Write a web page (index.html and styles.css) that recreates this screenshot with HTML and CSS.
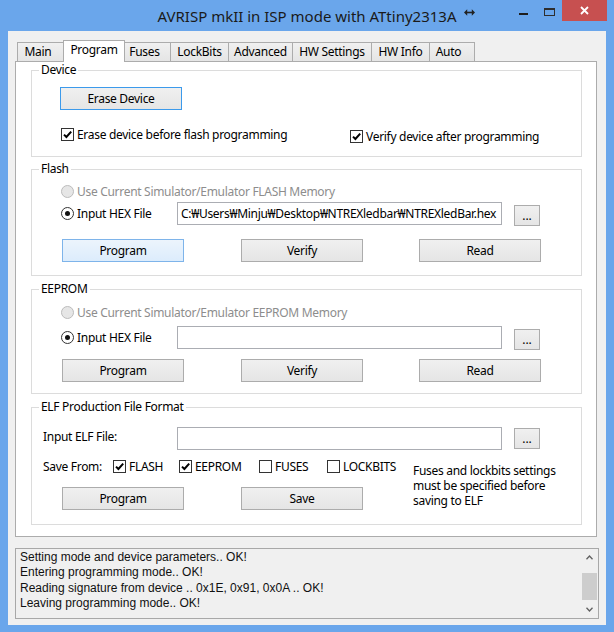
FILE: index.html
```html
<!DOCTYPE html>
<html>
<head>
<meta charset="utf-8">
<title>AVRISP mkII</title>
<link rel="stylesheet" href="styles.css">
</head>
<body>
<div class="window">
  <div class="titlebar">
    <div class="tb-left"></div>
    <div class="title">AVRISP mkII in ISP mode with ATtiny2313A</div>
    <div class="tb-right">
      <svg class="resize-arrow" width="11" height="7" viewBox="0 0 11 7"><path d="M2 3.5H9" stroke="#222" stroke-width="1.6"/><path d="M0 3.5L3.2 0.3V6.7Z M11 3.5L7.8 0.3V6.7Z" fill="#222"/></svg>
      <div class="caption-btns">
        <div class="cap min"><span class="min-bar"></span></div>
        <div class="cap max"><span class="max-box"></span></div>
        <div class="cap close"><svg width="9" height="9" viewBox="0 0 9 9"><path d="M1 1L8 8M8 1L1 8" stroke="#fff" stroke-width="1.8"/></svg></div>
      </div>
    </div>
  </div>
  <div class="client">
    <div class="tabs">
      <div class="tab t-main">Main</div>
      <div class="tab t-program active">Program</div>
      <div class="tab t-fuses">Fuses</div>
      <div class="tab t-lock">LockBits</div>
      <div class="tab t-adv">Advanced</div>
      <div class="tab t-hws">HW Settings</div>
      <div class="tab t-hwi">HW Info</div>
      <div class="tab t-auto">Auto</div>
    </div>
    <div class="panel">
      <div class="group g-device">
        <div class="legend">Device</div>
        <button class="btn default erase">Erase Device</button>
        <div class="check-row">
          <label class="chk chk-erase"><span class="cb"><svg width="11" height="11" viewBox="0 0 11 11"><path d="M2 5.6L4.4 8L9.2 2.6" fill="none" stroke="#000" stroke-width="2"/></svg></span>Erase device before flash programming</label>
          <label class="chk chk-verify"><span class="cb"><svg width="11" height="11" viewBox="0 0 11 11"><path d="M2 5.6L4.4 8L9.2 2.6" fill="none" stroke="#000" stroke-width="2"/></svg></span>Verify device after programming</label>
        </div>
      </div>

      <div class="group g-flash">
        <div class="legend">Flash</div>
        <div class="radio-row first disabled"><span class="radio"></span>Use Current Simulator/Emulator FLASH Memory</div>
        <div class="file-row">
          <div class="file-label"><span class="radio on"><span class="dot"></span></span>Input HEX File</div>
          <div class="input">C:₩Users₩Minju₩Desktop₩NTREXledbar₩NTREXledBar.hex</div>
          <button class="btn dots">...</button>
        </div>
        <div class="btn-row">
          <button class="btn hover b1">Program</button>
          <button class="btn b2">Verify</button>
          <button class="btn b3">Read</button>
        </div>
      </div>

      <div class="group g-eeprom">
        <div class="legend">EEPROM</div>
        <div class="radio-row first disabled"><span class="radio"></span>Use Current Simulator/Emulator EEPROM Memory</div>
        <div class="file-row">
          <div class="file-label"><span class="radio on"><span class="dot"></span></span>Input HEX File</div>
          <div class="input"></div>
          <button class="btn dots">...</button>
        </div>
        <div class="btn-row">
          <button class="btn b1">Program</button>
          <button class="btn b2">Verify</button>
          <button class="btn b3">Read</button>
        </div>
      </div>

      <div class="group g-elf">
        <div class="legend">ELF Production File Format</div>
        <div class="file-row elf-row">
          <div class="elf-label">Input ELF File:</div>
          <div class="input"></div>
          <button class="btn dots">...</button>
        </div>
        <div class="elf-bottom">
          <div class="elf-left">
            <div class="save-row">
              <span class="save-label">Save From:</span>
              <label class="chk s-flash"><span class="cb"><svg width="11" height="11" viewBox="0 0 11 11"><path d="M2 5.6L4.4 8L9.2 2.6" fill="none" stroke="#000" stroke-width="2"/></svg></span>FLASH</label>
              <label class="chk s-eeprom"><span class="cb"><svg width="11" height="11" viewBox="0 0 11 11"><path d="M2 5.6L4.4 8L9.2 2.6" fill="none" stroke="#000" stroke-width="2"/></svg></span>EEPROM</label>
              <label class="chk s-fuses"><span class="cb"></span>FUSES</label>
              <label class="chk s-lock"><span class="cb"></span>LOCKBITS</label>
            </div>
            <div class="btn-row elf-btns">
              <button class="btn b1">Program</button>
              <button class="btn b2">Save</button>
            </div>
          </div>
          <div class="note">Fuses and lockbits settings<br>must be specified before<br>saving to ELF</div>
        </div>
      </div>
    </div>

    <div class="log">
      <div class="log-text">
        <div>Setting mode and device parameters.. OK!</div>
        <div>Entering programming mode.. OK!</div>
        <div>Reading signature from device .. 0x1E, 0x91, 0x0A .. OK!</div>
        <div>Leaving programming mode.. OK!</div>
      </div>
      <div class="scrollbar">
        <div class="sb-btn"><svg width="7" height="5" viewBox="0 0 7 5"><path d="M0.5 4.2L3.5 1L6.5 4.2" fill="none" stroke="#606060" stroke-width="1.3"/></svg></div>
        <div class="sb-thumb"></div>
        <div class="sb-btn sb-down"><svg width="7" height="5" viewBox="0 0 7 5"><path d="M0.5 0.8L3.5 4L6.5 0.8" fill="none" stroke="#606060" stroke-width="1.3"/></svg></div>
      </div>
    </div>
  </div>
</div>
</body>
</html>
```

FILE: styles.css
```css
* { box-sizing: border-box; }
html, body { margin: 0; padding: 0; }
body {
  background: #6aa6eb;
  font-family: "Noto Sans", "DejaVu Sans", sans-serif;
  font-size: 12px;
  letter-spacing: -0.3px;
  color: #000;
}
.window {
  width: 614px;
  height: 632px;
  background: #6aa6eb;
  display: flex;
  flex-direction: column;
  overflow: hidden;
}

/* title bar */
.titlebar {
  height: 31px;
  flex: none;
  display: grid;
  grid-template-columns: 1fr auto 1fr;
}
.title {
  font-size: 15px;
  letter-spacing: 0;
  line-height: 20px;
  padding-top: 6px;
  color: #1a1a1a;
  white-space: nowrap;
}
.tb-right {
  display: flex;
  align-items: flex-start;
  justify-content: space-between;
}
.resize-arrow { margin: 9px 0 0 8px; }
.caption-btns { display: flex; margin-right: 7px; }
.cap { height: 21px; display: flex; justify-content: center; }
.cap.min, .cap.max { width: 26px; }
.cap.close { width: 45px; background: #c75050; align-items: center; }
.min-bar { width: 9px; height: 2px; background: #1e1e1e; margin-top: 13px; }
.max-box { width: 11px; height: 8px; border: 1px solid #2e2e2e; border-top-width: 2px; margin-top: 8px; }

/* client area */
.client {
  flex: none;
  margin: 0 8px;
  height: 594px;
  background: #f0f0f0;
  padding: 9px 0 0 7px;
  display: flex;
  flex-direction: column;
}

/* tabs */
.tabs {
  display: flex;
  align-items: flex-end;
  height: 21px;
  padding-left: 2px;
  flex: none;
}
.tab {
  height: 19px;
  line-height: 17px;
  text-align: center;
  border: 1px solid #acacac;
  border-bottom: none;
  background: linear-gradient(#f0f0f0, #e5e5e5);
  margin-right: -1px;
  white-space: nowrap;
}
.tab.active {
  position: relative;
  z-index: 2;
  height: 22px;
  margin-bottom: -1px;
  margin-left: -2px;
  margin-right: -3px;
  background: #fff;
}
.t-main { width: 49px; padding-right: 7px; }
.t-program { width: 62px; }
.t-fuses { width: 49px; padding-right: 4px; }
.t-lock { width: 59px; }
.t-adv { width: 65px; }
.t-hws { width: 80px; }
.t-hwi { width: 59px; }
.t-auto { width: 46px; padding-right: 7px; }

/* tab page */
.panel {
  flex: none;
  width: 582px;
  height: 476px;
  border: 1px solid #acacac;
  background: #fff;
  display: flex;
  flex-direction: column;
}
.group {
  flex: none;
  margin-left: 15px;
  width: 551px;
  border: 1px solid #dcdcdc;
  display: flex;
  flex-direction: column;
}
.legend {
  align-self: flex-start;
  margin: -9px 0 0 7px;
  padding: 0 2px;
  background: #fff;
  line-height: 16px;
  height: 16px;
  white-space: nowrap;
}
.g-device { margin-top: 8px; height: 87px; }
.g-flash { margin-top: 12px; height: 107px; }
.g-eeprom { margin-top: 13px; height: 105px; }
.g-elf { margin-top: 13px; height: 118px; }

/* buttons */
.btn {
  font: inherit;
  letter-spacing: inherit;
  color: #000;
  width: 122px;
  height: 23px;
  border: 1px solid #acacac;
  border-radius: 0;
  background: linear-gradient(#f0f0f0, #e5e5e5);
  padding: 0;
  margin: 0;
  line-height: 19px;
  flex: none;
}
.btn.default { border-color: #3c9aeb; }
.btn.hover { border-color: #7eb4ea; background: linear-gradient(#ecf4fc, #dcecfc); }
.btn.dots {
  width: 26px;
  height: 21px;
  margin: 3px 0 0 12px;
  line-height: 17px;
  letter-spacing: 0;
}

/* device */
.erase { margin: 9px 0 0 28px; }
.check-row { display: flex; margin-top: 18px; padding-left: 29px; }
.chk {
  display: flex;
  align-items: center;
  gap: 3px;
  height: 13px;
  white-space: nowrap;
  flex: none;
}
.chk-erase { width: 289px; }
.chk-verify { margin-top: 2px; }
.cb {
  width: 13px;
  height: 13px;
  border: 1px solid #333;
  background: #fff;
  flex: none;
  display: flex;
}

/* radios */
.radio-row {
  display: flex;
  align-items: center;
  gap: 3px;
  height: 13px;
  margin-left: 29px;
  white-space: nowrap;
}
.radio-row.disabled { color: #8d8d8d; }
.radio {
  width: 13px;
  height: 13px;
  border-radius: 50%;
  border: 1px solid #bcbcbc;
  background: #e6e6e6;
  flex: none;
  display: flex;
  align-items: center;
  justify-content: center;
}
.radio.on { border-color: #333; background: #fff; }
.dot { width: 5px; height: 5px; border-radius: 50%; background: #111; }
.g-flash .radio-row.first { margin-top: 8px; }
.g-eeprom .radio-row.first { margin-top: 9px; }

.file-row { display: flex; align-items: flex-start; padding-left: 29px; }
.g-flash .file-row { margin-top: 4px; }
.g-eeprom .file-row { margin-top: 7px; }
.file-label {
  width: 116px;
  height: 23px;
  display: flex;
  align-items: center;
  gap: 3px;
  white-space: nowrap;
}
.input {
  width: 325px;
  height: 23px;
  border: 1px solid #abadb3;
  background: #fff;
  padding: 0 0 0 3px;
  line-height: 21px;
  white-space: nowrap;
  overflow: hidden;
}
.btn-row { display: flex; padding-left: 30px; }
.btn-row .b2 { margin-left: 57px; }
.btn-row .b3 { margin-left: 56px; }
.g-flash .btn-row { margin-top: 13px; }
.g-eeprom .btn-row { margin-top: 9px; }

/* elf */
.elf-row { margin-top: 12px; padding-left: 11px; }
.elf-label { width: 134px; height: 23px; line-height: 20px; white-space: nowrap; }
.elf-row .btn.dots { margin-top: 1px; }
.elf-bottom { display: flex; }
.elf-left { width: 381px; flex: none; }
.save-row { display: flex; align-items: center; height: 13px; margin-top: 10px; padding-left: 11px; white-space: nowrap; }
.save-label { width: 70px; flex: none; }
.s-flash { width: 66px; }
.s-eeprom { width: 80px; }
.s-fuses { width: 68px; }
.elf-btns { margin-top: 14px; }
.note { margin-top: 13px; line-height: 15px; white-space: nowrap; }

/* log */
.log {
  flex: none;
  margin-top: 11px;
  width: 584px;
  height: 71px;
  border: 1px solid #a8a8a8;
  background: #f0f0f0;
  display: flex;
  font-family: "Liberation Sans", Arial, sans-serif;
  letter-spacing: 0;
}
.log-text {
  flex: 1;
  padding: 1px 0 0 4px;
  line-height: 15.3px;
  white-space: nowrap;
  overflow: hidden;
  color: #111;
}
.scrollbar { width: 17px; flex: none; display: flex; flex-direction: column; }
.sb-btn { height: 17px; display: flex; align-items: center; justify-content: center; flex: none; }
.sb-thumb { height: 27px; margin: 7px 1px 0 1px; background: #cdcdcd; flex: none; }
.sb-down { margin-top: auto; }
```
